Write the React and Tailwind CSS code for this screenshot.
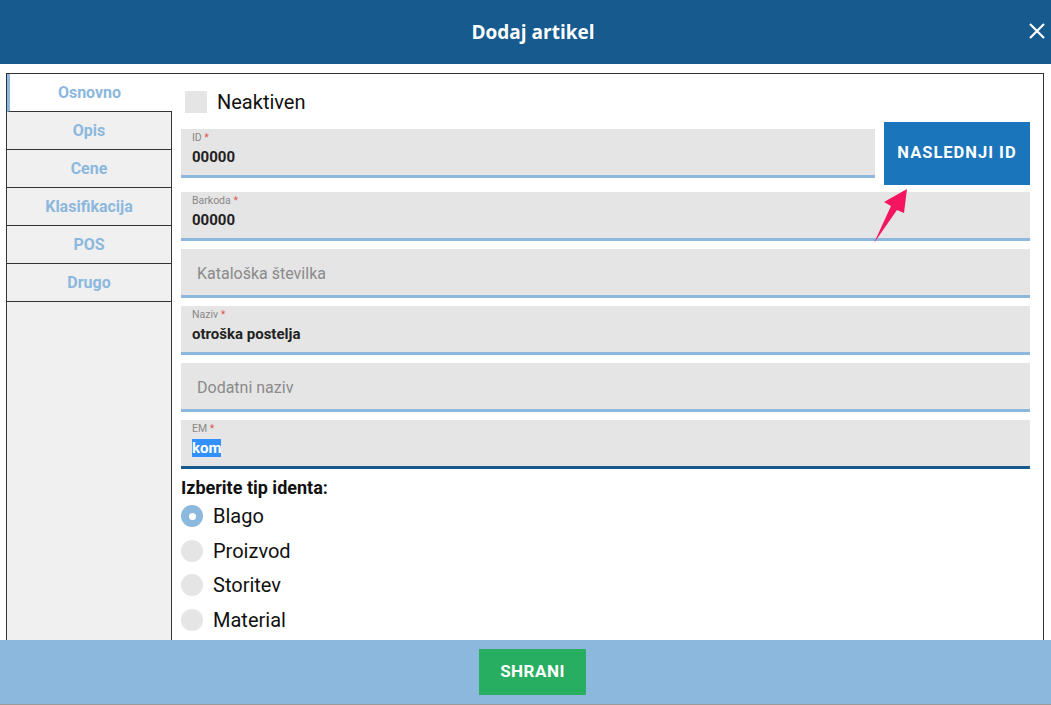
import React, { useState } from 'react'

const tabs = ['Osnovno', 'Opis', 'Cene', 'Klasifikacija', 'POS', 'Drugo']
const tipi = ['Blago', 'Proizvod', 'Storitev', 'Material']

function Field({ label, value, placeholder, focused, selected }) {
  const border = focused ? 'border-[#165a8e]' : 'border-[#8cb8de]'
  if (placeholder) {
    return (
      <div className={`h-[49px] bg-[#e5e5e5] border-b-[3px] ${border} flex items-center pl-[16px] pt-[4px]`}>
        <span className="text-[16px] text-[#8a8a8a]">{placeholder}</span>
      </div>
    )
  }
  return (
    <div className={`h-[49px] bg-[#e5e5e5] border-b-[3px] ${border} flex flex-col pl-[11px] pt-[2px]`}>
      <span className="text-[10.5px] leading-[14px] text-[#888]">
        {label} <span className="text-[#e0554f]">*</span>
      </span>
      <span className="text-[15px] leading-[20px] font-bold text-[#222] mt-[2px]">
        {selected ? <span className="bg-[#3390ff] text-white">{value}</span> : value}
      </span>
    </div>
  )
}

export default function App() {
  const [active, setActive] = useState(0)
  const [tip, setTip] = useState(0)

  return (
    <div className="relative h-[705px] w-full flex flex-col overflow-hidden bg-white font-['Roboto',sans-serif]">
      <header className="relative h-[64px] shrink-0 bg-[#165a8e] flex items-center justify-center pl-[15px]">
        <h1 className="text-white text-[19px] font-bold font-['Open_Sans',sans-serif]">Dodaj artikel</h1>
        <button className="absolute right-[5px] top-[22px] p-[1px]">
          <svg width="16" height="16" viewBox="0 0 16 16" stroke="white" strokeWidth="2.2">
            <path d="M1 1 L15 15 M15 1 L1 15" />
          </svg>
        </button>
      </header>

      <main className="flex-1 min-h-0 overflow-hidden pt-[9px] pl-[6px] pr-[7px]">
        <div className="h-[600px] border border-[#333] flex">
          <nav className="w-[165px] shrink-0 flex flex-col">
            {tabs.map((t, i) => (
              <button
                key={t}
                onClick={() => setActive(i)}
                className={
                  i === active
                    ? 'h-[38px] bg-white border-l-[3px] border-[#8cb8de] border-b border-b-[#333] text-[16px] font-bold text-[#8cb8de] pr-[3px]'
                    : 'h-[38px] bg-[#f0f0f0] border-r border-b border-[#333] text-[16px] font-bold text-[#8cb8de]'
                }
              >
                {t}
              </button>
            ))}
            <div className="flex-1 bg-[#f0f0f0] border-r border-[#333]" />
          </nav>

          <section className="flex-1 pl-[9px] pr-[13px] pt-[16px] flex flex-col">
            <label className="flex items-center gap-[10px] ml-[4px] h-[23px]">
              <span className="w-[22px] h-[22px] bg-[#e5e5e5]" />
              <span className="text-[20px] text-[#111]">Neaktiven</span>
            </label>

            <div className="flex items-center gap-[9px] mt-[9px]">
              <div className="flex-1">
                <Field label="ID" value="00000" />
              </div>
              <button className="w-[146px] h-[63px] bg-[#1b75bb] text-white text-[16.5px] font-bold tracking-[1px]">
                NASLEDNJI ID
              </button>
            </div>

            <div className="flex flex-col gap-[8px] mt-[7px]">
              <Field label="Barkoda" value="00000" />
              <Field placeholder="Kataloška številka" />
              <Field label="Naziv" value="otroška postelja" />
              <Field placeholder="Dodatni naziv" />
              <Field label="EM" value="kom" focused selected />
            </div>

            <p className="mt-[8px] text-[18px] font-bold text-[#111] leading-[22px]">Izberite tip identa:</p>
            <div className="flex flex-col">
              {tipi.map((t, i) => (
                <label key={t} className="h-[34.6px] flex items-center gap-[10px] cursor-pointer" onClick={() => setTip(i)}>
                  <span
                    className={
                      tip === i
                        ? 'w-[22px] h-[22px] rounded-full bg-[#8cb8de] flex items-center justify-center'
                        : 'w-[22px] h-[22px] rounded-full bg-[#e5e5e5]'
                    }
                  >
                    {tip === i && <span className="w-[7px] h-[7px] rounded-full bg-white" />}
                  </span>
                  <span className="text-[20px] text-[#111]">{t}</span>
                </label>
              ))}
            </div>
          </section>
        </div>
      </main>

      <footer className="h-[65px] shrink-0 bg-[#8cb8de] border-b border-[#9a9a9a] flex items-center justify-center pl-[14px] pb-[1px]">
        <button className="w-[107px] h-[46px] bg-[#27ae60] text-white text-[17px] font-bold tracking-[0.5px]">SHRANI</button>
      </footer>

      <svg className="absolute left-[870px] top-[185px]" width="45" height="65" viewBox="870 185 45 65">
        <polygon points="907,189 884,202 891,206 874,243 897,210 904,213" fill="#f5145f" />
      </svg>
    </div>
  )
}
